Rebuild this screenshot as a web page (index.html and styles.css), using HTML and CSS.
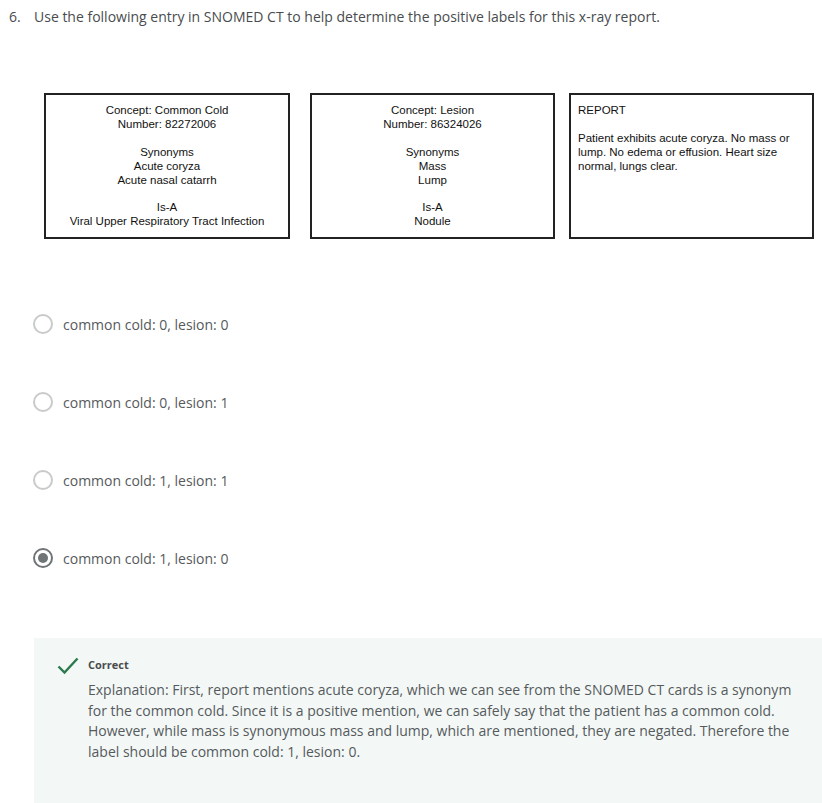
FILE: index.html
```html
<!DOCTYPE html>
<html>
<head>
<meta charset="utf-8">
<link rel="stylesheet" href="styles.css">
</head>
<body>
<div class="question">
  <div class="qtext"><span class="qnum">6.</span><span>Use the following entry in SNOMED CT to help determine the positive labels for this x-ray report.</span></div>
  <div class="cards">
    <div class="card card1">
      <p>Concept: Common Cold<br>Number: 82272006</p>
      <p>Synonyms<br>Acute coryza<br>Acute nasal catarrh</p>
      <p>Is-A<br>Viral Upper Respiratory Tract Infection</p>
    </div>
    <div class="card card2">
      <p>Concept: Lesion<br>Number: 86324026</p>
      <p>Synonyms<br>Mass<br>Lump</p>
      <p>Is-A<br>Nodule</p>
    </div>
    <div class="card card3">
      <p>REPORT</p>
      <p>Patient exhibits acute coryza. No mass or lump. No edema or effusion. Heart size normal, lungs clear.</p>
    </div>
  </div>
  <ul class="options">
    <li class="option"><span class="radio"></span><span>common cold: 0, lesion: 0</span></li>
    <li class="option"><span class="radio"></span><span>common cold: 0, lesion: 1</span></li>
    <li class="option"><span class="radio"></span><span>common cold: 1, lesion: 1</span></li>
    <li class="option"><span class="radio checked"></span><span>common cold: 1, lesion: 0</span></li>
  </ul>
  <div class="feedback">
    <svg class="check" width="22" height="18" viewBox="0 0 22 18"><path d="M1.5 9.5 L7.5 15.5 L20.5 1.5" fill="none" stroke="#2a7a4c" stroke-width="2.4"/></svg>
    <div class="fbody">
      <div class="fhead">Correct</div>
      <div class="ftext">Explanation: First, report mentions acute coryza, which we can see from the SNOMED CT cards is a synonym for the common cold. Since it is a positive mention, we can safely say that the patient has a common cold. However, while mass is synonymous mass and lump, which are mentioned, they are negated. Therefore the label should be common cold: 1, lesion: 0.</div>
    </div>
  </div>
</div>
</body>
</html>
```
FILE: styles.css
```css
html, body { margin: 0; padding: 0; background: #fff; }
body { font-family: "Open Sans", "Liberation Sans", sans-serif; color: #4a4d50; }
.question { width: 822px; }
.qtext { display: flex; padding: 7px 0 0 9px; font-size: 14px; line-height: 20px; color: #494c4e; }
.qnum { width: 25px; }
.cards { display: flex; margin: 66px 0 0 44px; }
.card { box-sizing: border-box; height: 146px; border: 2px solid #222; font-family: "Liberation Sans", Arial, sans-serif; font-size: 11.5px; line-height: 14px; color: #111; }
.card p { margin: 0 0 13.5px 0; }
.card1 { width: 246px; text-align: center; padding-top: 8px; }
.card2 { width: 245px; text-align: center; padding-top: 8px; margin-left: 20px; }
.card3 { width: 245px; padding: 8px 14px 0 7px; margin-left: 14px; }
.options { list-style: none; margin: 0; padding: 66px 0 0 33px; }
.option { display: flex; align-items: center; height: 38px; margin-bottom: 40px; font-size: 14px; color: #565a5c; }
.option:last-child { margin-bottom: 0; }
.radio { box-sizing: border-box; width: 20px; height: 20px; border: 2px solid #c8cacb; border-radius: 50%; margin-right: 10px; display: flex; align-items: center; justify-content: center; }
.radio.checked { border-color: #6f7477; }
.radio.checked::after { content: ""; width: 10px; height: 10px; border-radius: 50%; background: #6f7477; }
.feedback { display: flex; margin: 61px 0 0 34px; background: #f3f8f7; height: 165px; box-sizing: border-box; padding: 19px 0 0 23px; }
.check { margin-top: 0; flex: none; }
.fbody { margin-left: 9px; }
.fhead { font-weight: 700; font-size: 11px; line-height: 16px; color: #494c4e; }
.ftext { margin-top: 7px; font-size: 14px; line-height: 20.6px; color: #565a5c; width: 712px; }
```
